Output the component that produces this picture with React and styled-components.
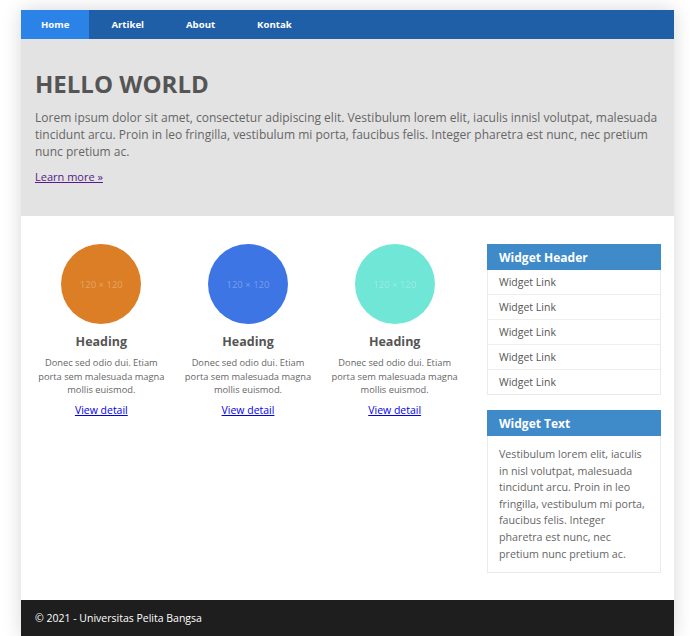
import React from "react";
import styled, { createGlobalStyle } from "styled-components";

const GlobalStyle = createGlobalStyle`
  body {
    margin: 0;
    background: #fff;
    font-family: "Open Sans", "Liberation Sans", sans-serif;
  }
`;

const Wrapper = styled.div`
  width: 653px;
  margin: 10px 0 0 21px;
  background: #fff;
  box-shadow: 0 0 18px rgba(0, 0, 0, 0.16);
`;

const Nav = styled.nav`
  display: flex;
  gap: 2px;
  height: 29px;
  background: #1f5fa8;
`;

const NavItem = styled.a`
  display: flex;
  align-items: center;
  padding: 0 20px;
  font-size: 9.6px;
  font-weight: 700;
  color: #fff;
  text-decoration: none;
  background: ${({ active }) => (active ? "#2b83e8" : "transparent")};
`;

const Hero = styled.section`
  background: #e3e3e3;
  padding: 30px 14px 30px;
  color: #555;
`;

const Title = styled.h1`
  margin: 0 0 10px;
  font-size: 24px;
  font-weight: 700;
  line-height: 30px;
  color: #555;
`;

const Lead = styled.p`
  margin: 0 0 4px;
  font-size: 12px;
  line-height: 17px;
  color: #666;
`;

const MoreLink = styled.a`
  font-size: 11px;
  color: #551a8b;
`;

const Body = styled.div`
  display: flex;
  align-items: flex-start;
  padding: 28px 13px 27px 7px;
  gap: 19px;
`;

const Features = styled.div`
  display: grid;
  grid-template-columns: repeat(3, 1fr);
  width: 440px;
`;

const Feature = styled.div`
  display: flex;
  flex-direction: column;
  align-items: center;
  text-align: center;
  padding: 0 4px;
`;

const Circle = styled.div`
  width: 80px;
  height: 80px;
  border-radius: 50%;
  background: ${({ color }) => color};
  display: flex;
  align-items: center;
  justify-content: center;
  font-size: 9.5px;
  color: rgba(255, 255, 255, 0.3);
`;

const Heading = styled.h3`
  margin: 9px 0 6px;
  font-size: 12.5px;
  font-weight: 700;
  color: #555;
`;

const Blurb = styled.p`
  margin: 0 0 6px;
  font-size: 9.3px;
  line-height: 13.5px;
  color: #666;
`;

const DetailLink = styled.a`
  font-size: 10.5px;
  color: #00e;
`;

const Sidebar = styled.aside`
  width: 174px;
  display: flex;
  flex-direction: column;
  gap: 15px;
`;

const Widget = styled.div`
  border: 1px solid #eaeaea;
  background: #fff;
`;

const WidgetHeader = styled.div`
  height: 26px;
  margin: -1px -1px 0;
  padding: 0 12px;
  display: flex;
  align-items: center;
  background: #3f8ac9;
  color: #fff;
  font-size: 12px;
  font-weight: 700;
`;

const WidgetLink = styled.div`
  height: 24px;
  padding: 0 11px;
  display: flex;
  align-items: center;
  font-size: 10.5px;
  color: #555;
  border-top: ${({ first }) => (first ? "none" : "1px solid #eee")};
`;

const WidgetText = styled.p`
  margin: 0;
  padding: 10px 11px 10px;
  font-size: 10.7px;
  line-height: 16.6px;
  color: #666;
`;

const Footer = styled.footer`
  background: #1e1e1e;
  color: #fff;
  font-size: 10.5px;
  padding: 11px 14px 12px;
`;

const features = [
  { color: "#db7e26" },
  { color: "#3d75e4" },
  { color: "#70e6d6" },
];

export default function App() {
  return (
    <>
      <GlobalStyle />
      <Wrapper>
        <Nav>
          <NavItem active>Home</NavItem>
          <NavItem>Artikel</NavItem>
          <NavItem>About</NavItem>
          <NavItem>Kontak</NavItem>
        </Nav>
        <Hero>
          <Title>HELLO WORLD</Title>
          <Lead>
            Lorem ipsum dolor sit amet, consectetur adipiscing elit. Vestibulum lorem elit, iaculis innisl volutpat, malesuada
            tincidunt arcu. Proin in leo fringilla, vestibulum mi porta, faucibus felis. Integer pharetra est nunc, nec pretium
            nunc pretium ac.
          </Lead>
          <MoreLink href="#">Learn more »</MoreLink>
        </Hero>
        <Body>
          <Features>
            {features.map((f, i) => (
              <Feature key={i}>
                <Circle color={f.color}>120 × 120</Circle>
                <Heading>Heading</Heading>
                <Blurb>
                  Donec sed odio dui. Etiam
                  <br />
                  porta sem malesuada magna
                  <br />
                  mollis euismod.
                </Blurb>
                <DetailLink href="#">View detail</DetailLink>
              </Feature>
            ))}
          </Features>
          <Sidebar>
            <Widget>
              <WidgetHeader>Widget Header</WidgetHeader>
              {[0, 1, 2, 3, 4].map((i) => (
                <WidgetLink key={i} first={i === 0}>
                  Widget Link
                </WidgetLink>
              ))}
            </Widget>
            <Widget>
              <WidgetHeader>Widget Text</WidgetHeader>
              <WidgetText>
                Vestibulum lorem elit, iaculis in nisl volutpat, malesuada tincidunt arcu. Proin in leo fringilla, vestibulum mi
                porta, faucibus felis. Integer pharetra est nunc, nec pretium nunc pretium ac.
              </WidgetText>
            </Widget>
          </Sidebar>
        </Body>
        <Footer>© 2021 - Universitas Pelita Bangsa</Footer>
      </Wrapper>
    </>
  );
}
